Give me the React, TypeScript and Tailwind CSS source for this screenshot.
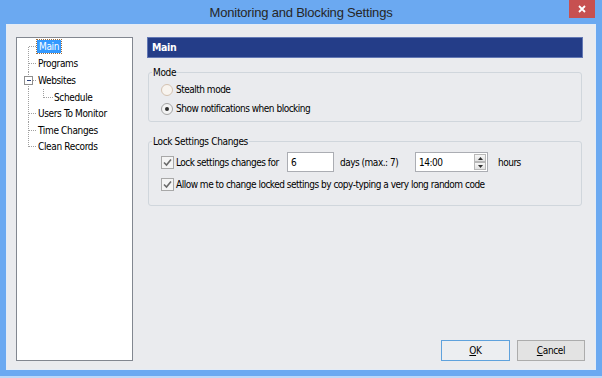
import React from 'react';

// Monitoring and Blocking Settings dialog (Windows 8 style)

const UI = "font-['DejaVu_Sans_Condensed','Liberation_Sans',sans-serif] text-[10px] leading-[13px] tracking-[-0.35px] text-black";

type TreeNode = {
  label: string;
  h: number;
  first?: boolean;
  last?: boolean;
  toggle?: boolean;
  child?: boolean;
  selected?: boolean;
};

const nodes: TreeNode[] = [
  { label: 'Main', h: 17, first: true, selected: true },
  { label: 'Programs', h: 17 },
  { label: 'Websites', h: 17, toggle: true },
  { label: 'Schedule', h: 16, child: true },
  { label: 'Users To Monitor', h: 17 },
  { label: 'Time Changes', h: 16 },
  { label: 'Clean Records', h: 17, last: true },
];

const Gutter = ({ node }: { node: TreeNode }) => {
  const c = Math.floor(node.h / 2) + 0.5;
  const w = node.child ? 36 : 20;
  return (
    <svg width={w} height={node.h} className="shrink-0" shapeRendering="crispEdges">
      <g stroke="#a0a0a0" strokeWidth="1" strokeDasharray="1 1">
        <line x1="11.5" y1={node.first ? c : 0} x2="11.5" y2={node.last ? c : node.h} />
        {!node.child && <line x1={node.toggle ? 16 : 12} y1={c} x2="20" y2={c} />}
        {node.child && (
          <>
            <line x1="26.5" y1="0" x2="26.5" y2={c} />
            <line x1="27" y1={c} x2="36" y2={c} />
          </>
        )}
      </g>
      {node.toggle && (
        <g>
          <rect x="7.5" y={c - 4} width="8" height="8" fill="#fff" stroke="#8f8f8f" />
          <line x1="9.5" y1={c} x2="14" y2={c} stroke="#2a3f7a" />
        </g>
      )}
    </svg>
  );
};

const Tree = () => (
  <div className="flex w-[117px] shrink-0 flex-col border border-[#828790] bg-white">
    {nodes.map((n) => (
      <div key={n.label} className="flex items-center whitespace-nowrap" style={{ height: n.h }}>
        <Gutter node={n} />
        <span
          className={
            n.selected
              ? 'bg-[#3399ff] px-[2px] text-white outline outline-1 outline-dotted outline-[#9a6a3a]'
              : 'px-[1px]'
          }
        >
          {n.label}
        </span>
      </div>
    ))}
  </div>
);

const Radio = ({ checked, label }: { checked?: boolean; label: string }) => (
  <label className="flex h-[19px] items-center whitespace-nowrap">
    <span
      className={`mr-[3px] flex h-[12px] w-[12px] items-center justify-center rounded-full border ${
        checked ? 'border-[#a3a3a3] bg-[#f3f3f3]' : 'border-[#d4c2b1] bg-[#f8f4ef]'
      }`}
    >
      {checked && <span className="h-[4px] w-[4px] rounded-full bg-[#2e2e2e]" />}
    </span>
    {label}
  </label>
);

const Check = () => (
  <span className="mr-[2px] flex h-[13px] w-[13px] shrink-0 items-center justify-center border border-[#a8a8a8] bg-[#f4f4f4]">
    <svg width="9" height="9" viewBox="0 0 9 9">
      <polyline points="1,4.5 3.5,7 8,1.5" fill="none" stroke="#6a6a6a" strokeWidth="1.6" />
    </svg>
  </span>
);

const SpinHalf = ({ up }: { up?: boolean }) => (
  <span className="flex flex-1 items-center justify-center border border-[#b8b8b8] bg-gradient-to-b from-[#f7f7f7] to-[#e2e2e2]">
    <svg width="5" height="3" viewBox="0 0 5 3">
      <polygon points={up ? '0,3 5,3 2.5,0' : '0,0 5,0 2.5,3'} fill="#303030" />
    </svg>
  </span>
);

const Group = ({ title, children, className }: { title: string; children: React.ReactNode; className?: string }) => (
  <fieldset className={`mx-[1px] rounded-[3px] border border-[#d0d6dc] pl-[3px] ${className ?? ''}`}>
    <legend className="px-[1px]">{title}</legend>
    <div className="pl-[9px] tracking-[-0.5px]">{children}</div>
  </fieldset>
);

export default function App() {
  return (
    <div className={`flex h-[378px] w-[602px] flex-col border-b-2 border-[#bcd8f8] bg-[#6ba9f1] px-[6px] ${UI}`}>
      {/* Title bar */}
      <div className="grid h-[24px] shrink-0 grid-cols-[1fr_auto_1fr]">
        <div />
        <div className="self-center pt-[1px] font-['Liberation_Sans',sans-serif] text-[13px] tracking-[-0.2px] text-[#262626]">
          Monitoring and Blocking Settings
        </div>
        <div className="flex justify-end">
          <button className="mr-[1px] flex h-[18px] w-[26px] items-center justify-center bg-[#c75050]">
            <svg width="8" height="8" viewBox="0 0 8 8">
              <path d="M1 1 L7 7 M7 1 L1 7" stroke="#fff" strokeWidth="1.8" />
            </svg>
          </button>
        </div>
      </div>

      {/* Client area */}
      <div className="flex h-[346px] shrink-0 border border-[#e4ecf6] bg-[#eaebee] pb-[8px] pl-[9px] pr-[12px] pt-[12px]">
        <Tree />

        <div className="ml-[14px] flex flex-1 flex-col whitespace-nowrap">
          <div className="flex h-[21px] items-center border border-[#6378b4] bg-[#243d88] pl-[4px] text-[10.5px] font-bold text-white">
            Main
          </div>

          <Group title="Mode" className="mt-[8px] pb-[3px]">
            <div className="pt-[1px]">
              <Radio label="Stealth mode" />
              <Radio checked label="Show notifications when blocking" />
            </div>
          </Group>

          <Group title="Lock Settings Changes" className="mt-[13px] pb-[11px]">
            <div className="mt-[3px] flex h-[22px] items-center">
              <Check />
              <span className="w-[111px]">Lock settings changes for</span>
              <span className="flex h-[20px] w-[47px] items-center border border-[#abadb3] bg-white pl-[3px]">6</span>
              <span className="ml-[6px] w-[75px]">days (max.: 7)</span>
              <span className="flex h-[20px] w-[73px] items-stretch border border-[#abadb3] bg-white">
                <span className="flex flex-1 items-center pl-[3px]">14:00</span>
                <span className="my-[1px] mr-[1px] flex w-[12px] flex-col">
                  <SpinHalf up />
                  <SpinHalf />
                </span>
              </span>
              <span className="ml-[10px]">hours</span>
            </div>
            <div className="mt-[2px] flex h-[19px] items-center">
              <Check />
              <span>Allow me to change locked settings by copy-typing a very long random code</span>
            </div>
          </Group>

          <div className="-mr-[2px] mt-auto flex justify-end gap-[7px]">
            <button className="h-[21px] w-[69px] border border-[#5fa2dd] bg-[#eceef1]">
              <span className="underline">O</span>K
            </button>
            <button className="h-[21px] w-[68px] border border-[#acacac] bg-[#e3e3e3]">
              <span className="underline">C</span>ancel
            </button>
          </div>
        </div>
      </div>
    </div>
  );
}
